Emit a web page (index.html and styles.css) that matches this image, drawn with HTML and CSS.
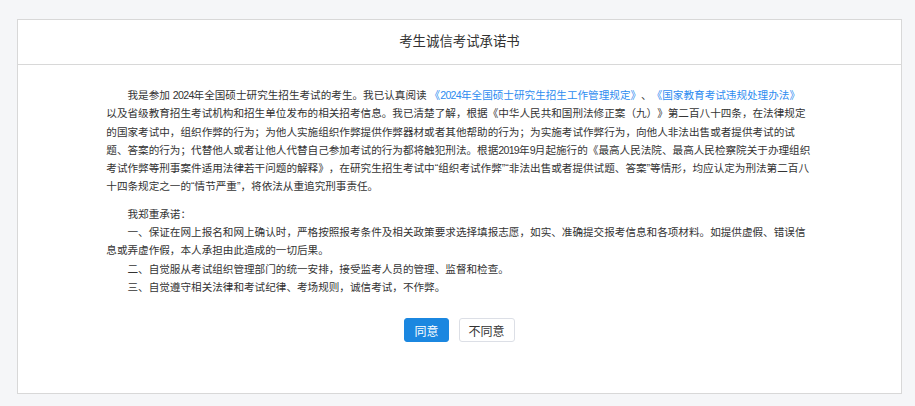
FILE: index.html
```html
<!DOCTYPE html>
<html lang="zh-CN">
<head>
    <meta charset="UTF-8">
    <meta name="viewport" content="width=device-width, initial-scale=1.0">
    <title>考生诚信考试承诺书</title>
    <link rel="stylesheet" href="styles.css">
</head>
<body>
    <div class="promise-card">
        <div class="promise-header">考生诚信考试承诺书</div>

        <div class="promise-body">
            <div class="promise-text">
                <p>我是参加 <span class="num">2024</span>年全国硕士研究生招生考试的考生。我已认真阅读 <a href="#">《<span class="num">2024</span>年全国硕士研究生招生工作管理规定》</a>、<a href="#">《国家教育考试违规处理办法》</a><br>以及省级教育招生考试机构和招生单位发布的相关招考信息。我已清楚了解，根据《中华人民共和国刑法修正案（九）》第二百八十四条，在法律规定的国家考试中，组织作弊的行为；为他人实施组织作弊提供作弊器材或者其他帮助的行为；为实施考试作弊行为，向他人非法出售或者提供考试的试题、答案的行为；代替他人或者让他人代替自己参加考试的行为都将触犯刑法。根据<span class="num">2019</span>年<span class="num">9</span>月起施行的《最高人民法院、最高人民检察院关于办理组织考试作弊等刑事案件适用法律若干问题的解释》，在研究生招生考试中“组织考试作弊”“非法出售或者提供试题、答案”等情形，均应认定为刑法第二百八十四条规定之一的“情节严重”，将依法从重追究刑事责任。</p>

                <p class="gap">我郑重承诺：</p>
                <p>一、保证在网上报名和网上确认时，严格按照报考条件及相关政策要求选择填报志愿，如实、准确提交报考信息和各项材料。如提供虚假、错误信息或弄虚作假，本人承担由此造成的一切后果。</p>
                <p>二、自觉服从考试组织管理部门的统一安排，接受监考人员的管理、监督和检查。</p>
                <p>三、自觉遵守相关法律和考试纪律、考场规则，诚信考试，不作弊。</p>
            </div>

            <div class="buttons">
                <button class="btn btn-agree">同意</button>
                <button class="btn btn-disagree">不同意</button>
            </div>
        </div>
    </div>
</body>
</html>
```

FILE: styles.css
```css
* {
    margin: 0;
    padding: 0;
    box-sizing: border-box;
    font-family: 'Liberation Sans', 'Noto Sans CJK SC', sans-serif;
}

body {
    background-color: #f5f6f8;
    padding: 19px 13px 0 17px;
}

.promise-card {
    background-color: #fff;
    border: 1px solid #d8d8d8;
    height: 375px;
}

.promise-header {
    height: 45px;
    line-height: 44px;
    border-bottom: 1px solid #d8d8d8;
    text-align: center;
    font-size: 13.4px;
    color: #333;
}

.promise-body {
    padding-top: 21px;
}

.promise-text {
    width: 80%;
    margin: 0 auto;
    font-size: 10.6px;
    line-height: 18.3px;
    color: #333;
    text-spacing-trim: space-all;
}

.promise-text p {
    text-indent: 2em;
}

.promise-text p.gap {
    margin-top: 9px;
}

.promise-text a {
    color: #2d8cf0;
    text-decoration: none;
}

/* digits in the source font run a bit narrower */
.num {
    letter-spacing: -0.7px;
}

.buttons {
    display: flex;
    justify-content: center;
    gap: 10px;
    margin-top: 22px;
}

.btn {
    height: 24px;
    padding: 0 9px;
    border: 1px solid #dcdfe6;
    border-radius: 3px;
    font-size: 12px;
    background-color: #fff;
    color: #333;
    cursor: pointer;
}

.btn-agree {
    background-color: #1b87e0;
    border-color: #1b87e0;
    color: #fff;
}
```
